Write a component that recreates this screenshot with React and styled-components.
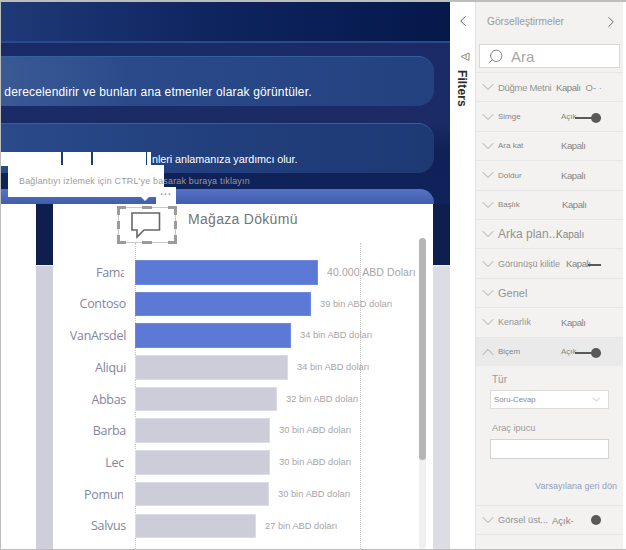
import React from "react";
import styled, { createGlobalStyle } from "styled-components";
import { ChevronDown, ChevronUp, ChevronLeft, ChevronRight, Search } from "lucide-react";

const Global = createGlobalStyle`
  html, body { margin: 0; padding: 0; background: #fff; }
  * { box-sizing: border-box; }
`;

const Frame = styled.div`
  width: 626px; height: 550px; display: flex; overflow: hidden; position: relative;
  border-top: 2px solid #bdbdbd; border-left: 1px solid #bdbdbd; border-bottom: 1px solid #bdbdbd;
  font-family: "Liberation Sans", Arial, sans-serif; background: #fff;
`;
const Canvas = styled.main`
  width: 449px; height: 100%; flex: none; display: flex; flex-direction: column; position: relative;
  background: linear-gradient(180deg, #1b2a66 0, #1a2b66 120px, #0f2157 150px, #10225a 190px);
`;
const TopBar = styled.div`
  height: 41px; flex: none; border-bottom: 2px solid #2a4a8c;
  background: linear-gradient(90deg, #1f3a78 0, #0f2560 45%, #04184a 100%);
  margin-bottom: 13px;
`;
const Pill = styled.div`
  width: 433px; height: 50px; flex: none; margin-bottom: ${p => p.$gap}px; display: flex; align-items: flex-end;
  padding: 0 0 ${p => p.$bottom}px ${p => p.$left}px; border-radius: 0 16px 16px 0; overflow: hidden; white-space: nowrap;
  border-top: 1px solid #33609f; color: #fff; font-size: ${p => p.$size}px; letter-spacing: ${p => p.$spacing}px;
  background: ${p => p.$bg};
`;
const ClippedLead = styled.span`
  margin-left: -7px;
`;
const Band = styled.div`
  width: 433px; height: 15px; flex: none; border-radius: 0 14px 0 0;
  background: linear-gradient(180deg, #5672c8, #405ea9);
`;
const Lower = styled.div`
  flex: 1; min-height: 0; display: grid; grid-template-columns: 35px 17px 380px 17px; background: #fff;
`;
const Rail = styled.div`
  background: linear-gradient(180deg, #0e1f4e 0 61px, #f0f0f4 61px 62px, ${p => p.$c} 62px);
`;
const Card = styled.section`
  background: #fff; position: relative; overflow: hidden;
`;
const CardHead = styled.div`
  display: flex; align-items: flex-start; gap: 11px; height: 39px; padding: 2px 0 0 64px;
`;
const CardTitle = styled.h2`
  margin: 5px 0 0; font-size: 14px; font-weight: 400; color: #757575; letter-spacing: 0.3px;
`;
const Chart = styled.div`
  position: relative; padding-top: 17px; display: flex; flex-direction: column;
`;
const GridLine = styled.i`
  position: absolute; top: 0; bottom: -20px; left: ${p => p.$x}px; border-left: 1px dotted #c4c4c4;
`;
const BarRow = styled.div`
  height: 31.7px; flex: none; display: flex; align-items: flex-start; position: relative;
`;
const Cat = styled.div`
  width: 73px; height: 24.5px; margin-right: 9px; flex: none; display: flex; justify-content: flex-end; align-items: center;
  padding-right: ${p => p.$pad}px; font-size: 12.5px; color: #85859b; font-family: "Open Sans", sans-serif; letter-spacing: -0.3px;
`;
const CatText = styled.span`
  white-space: nowrap; overflow: hidden; display: block; max-width: ${p => p.$clip ? p.$clip + "px" : "none"};
`;
const Bar = styled.div`
  height: 24.5px; flex: none; background: ${p => p.$on ? "#5c79d6" : "#cdcdd9"};
  border: 1px solid ${p => p.$on ? "#6d8ae0" : "#dcdce4"};
`;
const Val = styled.div`
  margin-left: 9px; height: 24px; line-height: 24px; font-size: ${p => p.$big ? 10.500 : 9.300}px; color: #a6a6a6; white-space: nowrap; letter-spacing: ${p => p.$big ? 0.1 : 0}px;
`;
const ScrollTrack = styled.div`
  position: absolute; right: 7px; top: 34px; bottom: 0; width: 7px; background: #f0f0f0; border-radius: 4px;
`;
const ScrollThumb = styled.div`
  height: 222px; background: #b5b5b5; border-radius: 4px;
`;
const TipStrip = styled.div`
  position: absolute; left: 0; top: 150px; width: 150px; height: 14px;
  background: linear-gradient(90deg, #fff 60px, #1f3b75 60px 62px, #fff 62px 90px, #1f3b75 90px 92px, #fff 92px 145px, #1f3b75 145px 146px, #fff 146px);
`;
const Tip = styled.div`
  position: absolute; left: 7px; top: 163px; width: 156px; height: 32px; background: #fff; white-space: nowrap;
  padding: 11px 0 0 11px; font-size: 8.9px; color: #9a9a9a; letter-spacing: 0.22px;
  &::after { content: ""; position: absolute; left: 133px; top: 32px; border: 4px solid transparent; border-top-color: #fff; border-bottom: 0; }
`;
const More = styled.div`
  position: absolute; left: 155px; top: 185px; width: 20px; height: 17px; background: #fff; color: #999; font-size: 10px;
  font-weight: 700; letter-spacing: 1px; text-align: center; line-height: 10px;
`;
const Strip = styled.aside`
  width: 25px; flex: none; background: #fff; display: flex; flex-direction: column; align-items: center; padding-top: 10px; color: #555;
`;
const FilterLabel = styled.div`
  writing-mode: vertical-rl; font-size: 12px; font-weight: 700; color: #2c2c2c; margin-top: 7px; letter-spacing: 0.1px; padding-right: 1px;
`;
const FunnelWrap = styled.div`
  margin-top: 22px; height: 11px; display: flex; padding-left: 5px;
`;
const Pane = styled.aside`
  width: 148px; flex: none; background: #f3f2f1; border-left: 1px solid #e2e2e2; display: flex; flex-direction: column; color: #8a8a8a;
`;
const PaneHead = styled.div`
  height: 42px; flex: none; display: flex; align-items: center; justify-content: space-between; padding: 0 3px 3px 11px;
  font-size: 10.200px; color: #9a9a9a;
`;
const SearchBox = styled.div`
  height: 24px; flex: none; margin: 0 3px 4px 3px; background: #fff; border: 1px solid #d8d8d8; display: flex; align-items: center;
  gap: 7px; padding-left: 7px; font-size: 15px; color: #a6a6a6;
`;
const Row = styled.div`
  height: 29.4px; flex: none; display: flex; align-items: center; padding: 0 0 0 6px; position: relative;
  border-top: 1.5px solid #e6e6e6; background: ${p => p.$active ? "#eaeaea" : "transparent"}; white-space: nowrap;
`;
const RowChevron = styled.span`
  width: 11px; height: 11px; flex: none; display: flex; align-items: center; justify-content: center; color: #8f8f8f;
`;
const RowLabel = styled.span`
  margin-left: 5px; width: ${p => p.$w}px; flex: none; font-size: ${p => p.$size}px; color: ${p => p.$size < 9 ? "#858585" : "#929292"};
  letter-spacing: ${p => p.$track || 0}px;
`;
const RowValue = styled.span`
  font-size: ${p => p.$size || 9.500}px; color: #858585; letter-spacing: ${p => p.$track ?? -0.4}px;
`;
const Extra = styled.span`
  font-size: 9.500px; color: #929292; margin-left: 5px;
`;
const Toggle = styled.span`
  position: absolute; left: ${p => p.$line}px; right: 22px; top: 50%; height: 2px; background: #595959;
  &::after { content: ""; display: ${p => p.$knob ? "block" : "none"}; position: absolute; right: 0; top: -4px; width: 10px; height: 10px; border-radius: 50%; background: #595959; }
`;
const Knob = styled.span`
  position: absolute; right: 22px; top: 9px; width: 10px; height: 10px; border-radius: 50%; background: #595959;
`;
const Section = styled.div`
  height: 139px; flex: none; padding: 8px 14px 0 14px; display: flex; flex-direction: column;
`;
const FieldLabel = styled.div`
  font-size: ${p => p.$size}px; color: #9a9a9a; padding-left: 2px; margin-top: ${p => p.$top || 0}px;
`;
const Select = styled.div`
  height: 19px; margin-top: 5px; background: #fff; border: 1px solid #dcdcdc; display: flex; align-items: center; justify-content: space-between;
  padding: 0 5px 0 3px; font-size: 7.800px; color: #8a8a8a;
`;
const Input = styled.div`
  height: 20px; margin-top: 6px; background: #fff; border: 1px solid #d4d4d4;
`;
const Link = styled.div`
  margin-top: 22px; font-size: 9px; color: #929ebf; text-align: right; margin-right: -8px; white-space: nowrap;
`;

const bars = [
  { name: "Fama", w: 183, v: "40.000 ABD Doları", on: 1, big: 1, clip: 28, pad: 2 },
  { name: "Contoso", w: 176, v: "39 bin ABD doları", on: 1 },
  { name: "VanArsdel", w: 156, v: "34 bin ABD doları", on: 1 },
  { name: "Aliqui", w: 153, v: "34 bin ABD doları" },
  { name: "Abbas", w: 142, v: "32 bin ABD doları" },
  { name: "Barba", w: 135, v: "30 bin ABD doları" },
  { name: "Lec", w: 135, v: "30 bin ABD doları", pad: 2 },
  { name: "Pomum", w: 134, v: "30 bin ABD doları", clip: 39, pad: 3 },
  { name: "Salvus", w: 121, v: "27 bin ABD doları" },
];

const rows = [
  { l: "Düğme Metni", s: 9.500, w: 58, t: -0.3, v: "Kapalı", extra: "O-  ·" },
  { l: "Simge", s: 8, w: 63, v: "Açık", vs: 8, vt: 0, line: 99, knob: 1 },
  { l: "Ara kat", s: 8, w: 63, v: "Kapalı" },
  { l: "Doldur", s: 8, w: 63, v: "Kapalı" },
  { l: "Başlık", s: 8, w: 64, v: "Kapalı" },
  { l: "Arka plan...", s: 12, w: 58, v: "Kapalı", vs: 10, vt: 0 },
  { l: "Görünüşü kilitle", s: 9, w: 68, v: "Kapalı", line: 112 },
  { l: "Genel", s: 11, w: 40 },
  { l: "Kenarlık", s: 9, w: 63, v: "Kapalı" },
];

const SelectionBox = () => (
  <svg width="60" height="38" viewBox="0 0 60 38" style={{ flex: "none" }}>
    <rect x="1.5" y="1.5" width="57" height="35" fill="none" stroke="#c9c9c9" />
    <g fill="none" stroke="#9b9b9b" strokeWidth="3">
      <path d="M1.5 9V1.5H9M51 1.5h7.5V9M58.500 29v7.500H51M9 36.500H1.500V29" />
      <path d="M25 1.500h10M25 36.500h10M1.500 15v8M58.500 15v8" />
    </g>
    <path d="M15 7h27.500v17H27l-7 7v-7h-5z" fill="#fff" stroke="#666" strokeWidth="1.600" />
  </svg>
);

const Funnel = () => (
  <svg width="10" height="10" viewBox="0 0 10 10">
    <path d="M9 1L1 4.500 9 8.500zM6 3v3" fill="none" stroke="#8a8a70" strokeWidth="1" />
  </svg>
);

const Chevron = ({ up }) => {
  const Icon = up ? ChevronUp : ChevronDown;
  return <RowChevron><Icon size={20} strokeWidth={0.9} style={{ flex: "none" }} /></RowChevron>;
};

export default function App() {
  return (
    <Frame>
      <Global />
      <Canvas>
        <TopBar />
        <Pill $gap={17} $bottom={7} $left={0} $size={12} $spacing={0.16}
          $bg="linear-gradient(90deg,#3a5a96 0,#2a4a8a 30%,#24417f 100%)">
          <ClippedLead>a derecelendirir ve bunları ana etmenler olarak görüntüler.</ClippedLead>
        </Pill>
        <Pill $gap={16} $bottom={8} $left={151} $size={10.800} $spacing={-0.05}
          $bg="linear-gradient(90deg,#2a4a8a 0,#213f7c 50%,#1e3a75 100%)">
          nleri anlamanıza yardımcı olur.
        </Pill>
        <Band />
        <Lower>
          <div />
          <Rail $c="#cfcfdc" />
          <Card>
            <CardHead>
              <SelectionBox />
              <CardTitle>Mağaza Dökümü</CardTitle>
            </CardHead>
            <Chart>
              <GridLine $x={82} />
              <GridLine $x={307} />
              {bars.map(b => (
                <BarRow key={b.name}>
                  <Cat $pad={b.pad || 0}><CatText $clip={b.clip}>{b.name}</CatText></Cat>
                  <Bar $on={b.on} style={{ width: b.w }} />
                  <Val $big={b.big}>{b.v}</Val>
                </BarRow>
              ))}
            </Chart>
            <ScrollTrack><ScrollThumb /></ScrollTrack>
          </Card>
          <Rail $c="#dcdce4" />
        </Lower>
        <TipStrip />
        <Tip>Bağlantıyı izlemek için CTRL'ye basarak buraya tıklayın</Tip>
        <More>...</More>
      </Canvas>
      <Strip>
        <ChevronLeft size={18} strokeWidth={1.300} color="#555" />
        <FunnelWrap><Funnel /></FunnelWrap>
        <FilterLabel>Filters</FilterLabel>
      </Strip>
      <Pane>
        <PaneHead>
          Görselleştirmeler
          <ChevronRight size={18} strokeWidth={1.300} color="#666" />
        </PaneHead>
        <SearchBox>
          <Search size={17} strokeWidth={1.100} color="#666" style={{ transform: "scaleX(-1)" }} />
          Ara
        </SearchBox>
        {rows.map(r => (
          <Row key={r.l}>
            <Chevron />
            <RowLabel $size={r.s} $w={r.w} $track={r.t}>{r.l}</RowLabel>
            {r.v && <RowValue $size={r.vs} $track={r.vt}>{r.v}</RowValue>}
            {r.extra && <Extra>{r.extra}</Extra>}
            {r.line && <Toggle $line={r.line} $knob={r.knob} />}
          </Row>
        ))}
        <Row $active>
          <Chevron up />
          <RowLabel $size={8} $w={63}>Biçem</RowLabel>
          <RowValue $size={8} $track={0}>Açık</RowValue>
          <Toggle $line={99} $knob />
        </Row>
        <Section>
          <FieldLabel $size={10}>Tür</FieldLabel>
          <Select>Soru-Cevap<ChevronDown size={13} strokeWidth={1} color="#999" /></Select>
          <FieldLabel $size={9.200} $top={14.500}>Araç ipucu</FieldLabel>
          <Input />
          <Link>Varsayılana geri dön</Link>
        </Section>
        <Row>
          <Chevron />
          <RowLabel $size={9.300} $w={54}>Görsel üst...</RowLabel>
          <RowValue $track={0}>Açık-</RowValue>
          <Knob />
        </Row>
        <Row />
      </Pane>
    </Frame>
  );
}
